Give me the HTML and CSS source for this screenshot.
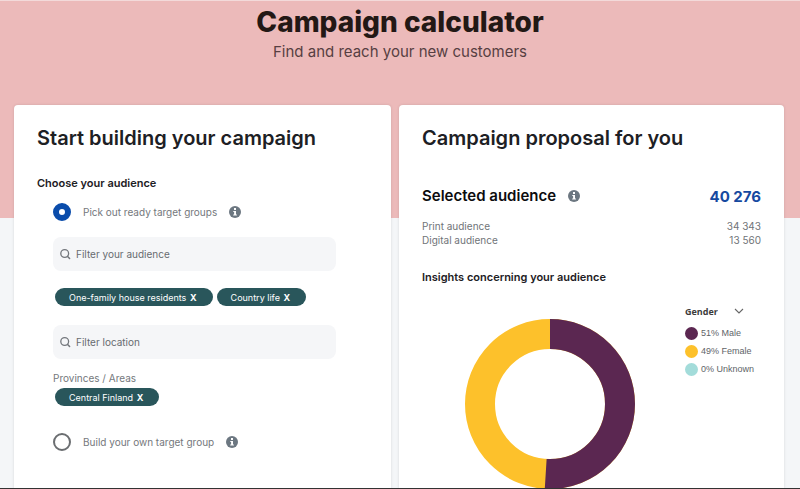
FILE: index.html
```
<!DOCTYPE html>
<html lang="en">
<head>
  <meta charset="UTF-8">
  <meta name="viewport" content="width=device-width, initial-scale=1.0">
  <title>Campaign calculator</title>
  <link rel="stylesheet" href="styles.css">
</head>
<body>
  <svg class="sprite" width="0" height="0" aria-hidden="true">
    <symbol id="info" viewBox="0 0 12 12">
      <circle cx="6" cy="6" r="6" fill="#6c7781"/>
      <rect x="5" y="2" width="2" height="2" fill="#fff"/>
      <path d="M4.3 5H7v3.6h.9v1H4.2v-1h.9V6h-.8z" fill="#fff"/>
    </symbol>
    <symbol id="search" viewBox="0 0 12 12">
      <circle cx="5.7" cy="5.5" r="3.9" fill="none" stroke="#73777c" stroke-width="1.3"/>
      <path d="M8.6 8.4l2 2.1" stroke="#73777c" stroke-width="1.5" stroke-linecap="round"/>
    </symbol>
  </svg>

  <header class="hero">
    <h1>Campaign calculator</h1>
    <p>Find and reach your new customers</p>
  </header>

  <main class="columns">
    <section class="card">
      <h2>Start building your campaign</h2>
      <h3 class="choose">Choose your audience</h3>
      <div class="options">
        <div class="option">
          <input type="radio" name="target" id="ready" checked>
          <label for="ready">Pick out ready target groups</label>
          <svg class="icon"><use href="#info"/></svg>
        </div>
        <div class="search">
          <svg class="icon"><use href="#search"/></svg>
          <input type="text" placeholder="Filter your audience" aria-label="Filter your audience">
        </div>
        <div class="tags">
          <button type="button" class="tag">One-family house residents <b>X</b></button>
          <button type="button" class="tag">Country life <b>X</b></button>
        </div>
        <div class="search">
          <svg class="icon"><use href="#search"/></svg>
          <input type="text" placeholder="Filter location" aria-label="Filter location">
        </div>
        <p class="area">Provinces / Areas</p>
        <div class="tags area-tags">
          <button type="button" class="tag">Central Finland <b>X</b></button>
        </div>
        <div class="option">
          <input type="radio" name="target" id="own">
          <label for="own">Build your own target group</label>
          <svg class="icon"><use href="#info"/></svg>
        </div>
      </div>
    </section>

    <section class="card">
      <h2>Campaign proposal for you</h2>
      <div class="selected">
        <h3>Selected audience</h3>
        <svg class="icon"><use href="#info"/></svg>
        <strong>40 276</strong>
      </div>
      <dl class="numbers">
        <dt>Print audience</dt><dd>34 343</dd>
        <dt>Digital audience</dt><dd>13 560</dd>
      </dl>
      <h3>Insights concerning your audience</h3>
      <div class="insights">
        <svg class="donut" viewBox="0 0 170 170" role="img" aria-label="Gender">
          <circle cx="85" cy="85" r="70" pathLength="100" stroke="#fdc12b"/>
          <circle cx="85" cy="85" r="70" pathLength="100" stroke="#5b2751" stroke-dasharray="51 49" transform="rotate(-90 85 85)"/>
        </svg>
        <div class="legend">
          <div class="gender">
            <select aria-label="Insight">
              <option>Gender</option>
            </select>
            <svg class="chevron" viewBox="0 0 10 6"><path d="M1 1l4 4 4-4" fill="none" stroke="#666" stroke-width="1.1"/></svg>
          </div>
          <ul>
            <li class="male">51% Male</li>
            <li class="female">49% Female</li>
            <li class="unknown">0% Unknown</li>
          </ul>
        </div>
      </div>
    </section>
  </main>
</body>
</html>
```
FILE: styles.css
```
* {
  box-sizing: border-box;
}
body {
  display: flex;
  flex-direction: column;
  height: 100vh;
  margin: 0;
  overflow: hidden;
  border-top: 1px solid #f3dada;
  border-bottom: 1px solid #333;
  background: linear-gradient(#ecbaba 218px, #f4f6f8 218px);
  color: #1d2024;
  font-family: Inter, "Liberation Sans", sans-serif;
  font-size: 10px;
}
h1, h2, h3, p, ul, dl, dd {
  margin: 0;
}
.sprite {
  position: absolute;
}
.icon {
  flex: none;
  width: 12px;
  height: 12px;
}

/* header */
.hero {
  padding: 3px 0 41px;
  text-align: center;
}
.hero h1 {
  color: #231815;
  font-size: 28px;
  font-weight: 800;
  line-height: 36px;
}
.hero p {
  color: #573f42;
  font-size: 15px;
  line-height: 24px;
}

/* cards */
.columns {
  flex: 1;
  display: grid;
  grid-template-columns: 377fr 385fr;
  gap: 8px;
  min-height: 0;
  padding: 0 16px 0 14px;
}
.card {
  min-width: 0;
  padding: 21px 23px 0;
  border-radius: 4px 4px 0 0;
  background: #fff;
  box-shadow: 0 0 3px rgba(0, 0, 0, .12);
}
.card h2 {
  font-size: 20px;
  font-weight: 600;
  line-height: 24px;
}
.card h3 {
  font-size: 11px;
  font-weight: 600;
  line-height: 16px;
}
.card .choose {
  margin-top: 25px;
}

/* target options */
.options {
  margin-top: 12px;
  padding: 0 32px 0 16px;
}
.option {
  display: flex;
  align-items: center;
  gap: 12px;
  height: 18px;
  color: #74787c;
}
.option input {
  appearance: none;
  width: 18px;
  height: 18px;
  margin: 0;
  border: 2px solid #6b6e71;
  border-radius: 50%;
  background: #fff;
}
.option input:checked {
  border: 6px solid #0a4cab;
}
.search {
  display: flex;
  align-items: center;
  gap: 5px;
  height: 34px;
  margin: 16px 0 17px;
  padding: 0 6px;
  border-radius: 8px;
  background: #f5f6f8;
}
.search input {
  flex: 1;
  min-width: 0;
  padding: 0;
  border: 0;
  background: none;
  font: inherit;
}
.search input::placeholder {
  color: #686c70;
}
.tags {
  display: flex;
  gap: 4px;
  margin: 0 2px 19px;
}
.tag {
  flex: none;
  height: 18px;
  padding: 0 16px 0 14px;
  border: 0;
  border-radius: 9px;
  background: #29565b;
  color: #fff;
  font: inherit;
  font-size: 9px;
}
.tag b {
  margin-left: 1px;
}
.area {
  margin-top: -6px;
  color: #74787c;
  line-height: 16px;
}
.area-tags {
  margin: 2px 2px 27px;
}

/* audience numbers */
.selected {
  display: flex;
  align-items: center;
  gap: 12px;
  height: 20px;
  margin-top: 36px;
}
.card .selected h3 {
  color: #0c0c0e;
  font-size: 15px;
}
.selected strong {
  margin-left: auto;
  color: #1649a0;
  font-size: 15px;
}
.numbers {
  display: grid;
  grid-template-columns: 1fr auto;
  margin: 13px 0 22px;
  color: #707478;
  line-height: 14px;
}
.numbers dd {
  text-align: right;
}

/* chart */
.insights {
  display: flex;
  justify-content: space-between;
  margin-top: 18px;
  padding-left: 43px;
}
.donut {
  flex: none;
  width: 170px;
  height: 170px;
  margin-top: 16px;
}
.donut circle {
  fill: none;
  stroke-width: 30;
}
.legend {
  width: 76px;
  color: #606468;
  font-family: "Liberation Sans", Arial, sans-serif;
  font-size: 9px;
}
.gender {
  display: flex;
  align-items: center;
  justify-content: space-between;
  height: 16px;
  padding-right: 17px;
}
.gender select {
  appearance: none;
  padding: 0;
  border: 0;
  background: none;
  color: #3c3c3c;
  font: bold 9px "Open Sans", sans-serif;
}
.chevron {
  width: 10px;
  height: 6px;
}
.legend ul {
  margin-top: 5px;
  padding: 0;
  list-style: none;
}
.legend li {
  display: flex;
  align-items: center;
  gap: 3px;
  height: 18px;
  white-space: nowrap;
}
.legend li::before {
  content: "";
  width: 13px;
  height: 13px;
  border-radius: 50%;
}
.male::before {
  background: #5b2751;
}
.female::before {
  background: #fdc12b;
}
.unknown::before {
  background: #a3dcda;
}
```
